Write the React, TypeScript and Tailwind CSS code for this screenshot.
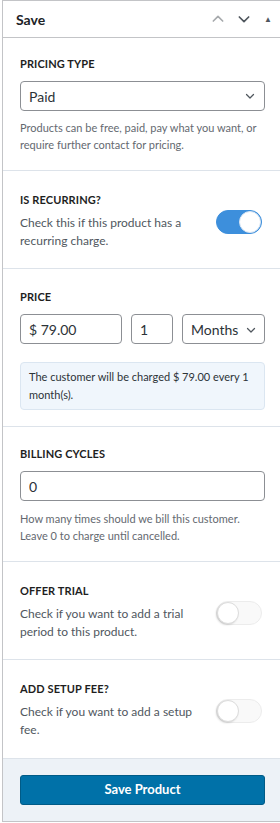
import { useState } from "react";

function Chevron({ className = "" }: { className?: string }) {
  return (
    <svg width="12" height="12" viewBox="0 0 24 24" fill="none" stroke="currentColor" strokeWidth="2.5" strokeLinecap="round" strokeLinejoin="round" className={className}>
      <path d="M5 9l7 7 7-7" />
    </svg>
  );
}

function Toggle({ on, onChange }: { on: boolean; onChange: () => void }) {
  return (
    <button
      type="button"
      onClick={onChange}
      className={
        "relative shrink-0 mr-[3px] w-[46px] h-[24px] rounded-full border transition-colors " +
        (on ? "bg-[#3d8fdc] border-[#3d8fdc]" : "bg-[#f9f9f9] border-[#ececec]")
      }
    >
      <span
        className={
          "absolute top-[0px] w-[22px] h-[22px] rounded-full bg-white border " +
          (on ? "right-[0px] border-[#d6e4f3]" : "left-[0px] border-[#dcdcdc] shadow-[-1px_1px_2px_rgba(0,0,0,0.15)]")
        }
      />
    </button>
  );
}

const labelCls = "block text-[11px] leading-[14px] font-bold text-[#1e1e1e] uppercase tracking-[0.01em]";
const helpCls = "text-[11px] leading-[17px] text-[#646970]";
const descCls = "text-[12px] leading-[18px] text-[#50575e]";
const inputCls = "h-[30px] border border-[#8c8f94] rounded-[4px] bg-white px-[8px] text-[14px] text-[#2c3338] focus:outline-none";
const section = "pl-[17px] pr-[16px] border-b border-[#dde3ea]";

export default function App() {
  const [recurring, setRecurring] = useState(true);
  const [trial, setTrial] = useState(false);
  const [setup, setSetup] = useState(false);

  return (
    <div className="w-[280px] h-[823px] overflow-hidden bg-white font-['Lato','Noto_Sans',sans-serif]">
      <div className="ml-[2px] w-[280px] h-[822px] border border-[#c3c4c7] bg-white flex flex-col">
        {/* header */}
        <div className="h-[37px] shrink-0 border-b border-[#c3c4c7] flex items-center pl-[13px] pr-[7px]">
          <h2 className="flex-1 text-[14px] font-bold text-[#1d2327]">Save</h2>
          <div className="flex items-center gap-[10px]">
            <Chevron className="rotate-180 text-[#a7aaad] w-[16px] h-[16px]" />
            <Chevron className="text-[#50575e] w-[16px] h-[16px]" />
            <span className="text-[8px] text-[#50575e] w-[12px] text-center">▲</span>
          </div>
        </div>

        {/* pricing type */}
        <div className={section + " pt-[19px] pb-[17px]"}>
          <label className={labelCls + " mb-[10px]"}>Pricing Type</label>
          <div className="relative">
            <select className={inputCls + " w-full appearance-none h-[29px]"} defaultValue="paid">
              <option value="free">Free</option>
              <option value="paid">Paid</option>
              <option value="pwyw">Pay what you want</option>
              <option value="contact">Contact</option>
            </select>
            <Chevron className="absolute right-[9px] top-[9px] text-[#50575e] pointer-events-none" />
          </div>
          <p className={helpCls + " mt-[8px]"}>
            Products can be free, paid, pay what you want, or require further contact for pricing.
          </p>
        </div>

        {/* recurring */}
        <div className={section + " pt-[22px] pb-[18px] flex items-center gap-[12px]"}>
          <div className="flex-1">
            <div className={labelCls + " mb-[7px]"}>Is Recurring?</div>
            <p className={descCls}>Check this if this product has a recurring charge.</p>
          </div>
          <Toggle on={recurring} onChange={() => setRecurring(!recurring)} />
        </div>

        {/* price */}
        <div className={section + " pt-[21px] pb-[16px]"}>
          <label className={labelCls + " mb-[10px]"}>Price</label>
          <div className="flex gap-[9px]">
            <input className={inputCls + " w-[102px]"} defaultValue="$ 79.00" />
            <input className={inputCls + " w-[42px]"} defaultValue="1" />
            <div className="relative flex-1">
              <select className={inputCls + " w-full appearance-none"} defaultValue="months">
                <option value="days">Days</option>
                <option value="weeks">Weeks</option>
                <option value="months">Months</option>
                <option value="years">Years</option>
              </select>
              <Chevron className="absolute right-[8px] top-[10px] text-[#50575e] pointer-events-none" />
            </div>
          </div>
          <div className="mt-[18px] rounded-[4px] border border-[#dbe6f1] bg-[#f0f6fc] px-[8px] py-[5px] text-[11px] leading-[18px] text-[#2c3338]">
            The customer will be charged $ 79.00 every 1 month(s).
          </div>
        </div>

        {/* billing cycles */}
        <div className={section + " pt-[20px] pb-[17px]"}>
          <label className={labelCls + " mb-[10px]"}>Billing Cycles</label>
          <input className={inputCls + " w-full h-[29px]"} defaultValue="0" />
          <p className={helpCls + " mt-[9px]"}>
            How many times should we bill this customer. Leave 0 to charge until cancelled.
          </p>
        </div>

        {/* offer trial */}
        <div className={section + " pt-[22px] pb-[18px] flex items-center gap-[12px]"}>
          <div className="flex-1">
            <div className={labelCls + " mb-[7px]"}>Offer Trial</div>
            <p className={descCls}>Check if you want to add a trial period to this product.</p>
          </div>
          <Toggle on={trial} onChange={() => setTrial(!trial)} />
        </div>

        {/* setup fee */}
        <div className="pl-[17px] pr-[16px] pt-[22px] pb-[19px] flex items-center gap-[12px]">
          <div className="flex-1">
            <div className={labelCls + " mb-[7px]"}>Add Setup Fee?</div>
            <p className={descCls}>Check if you want to add a setup fee.</p>
          </div>
          <Toggle on={setup} onChange={() => setSetup(!setup)} />
        </div>

        {/* footer */}
        <div className="flex-1 bg-[#edf2f7] border-t border-[#dde3ea] pl-[17px] pr-[16px] pt-[16px]">
          <button type="button" className="w-full h-[30px] rounded-[3px] bg-[#0071a8] border border-[#005b87] text-white text-[13px] font-bold">
            Save Product
          </button>
        </div>
      </div>
    </div>
  );
}
